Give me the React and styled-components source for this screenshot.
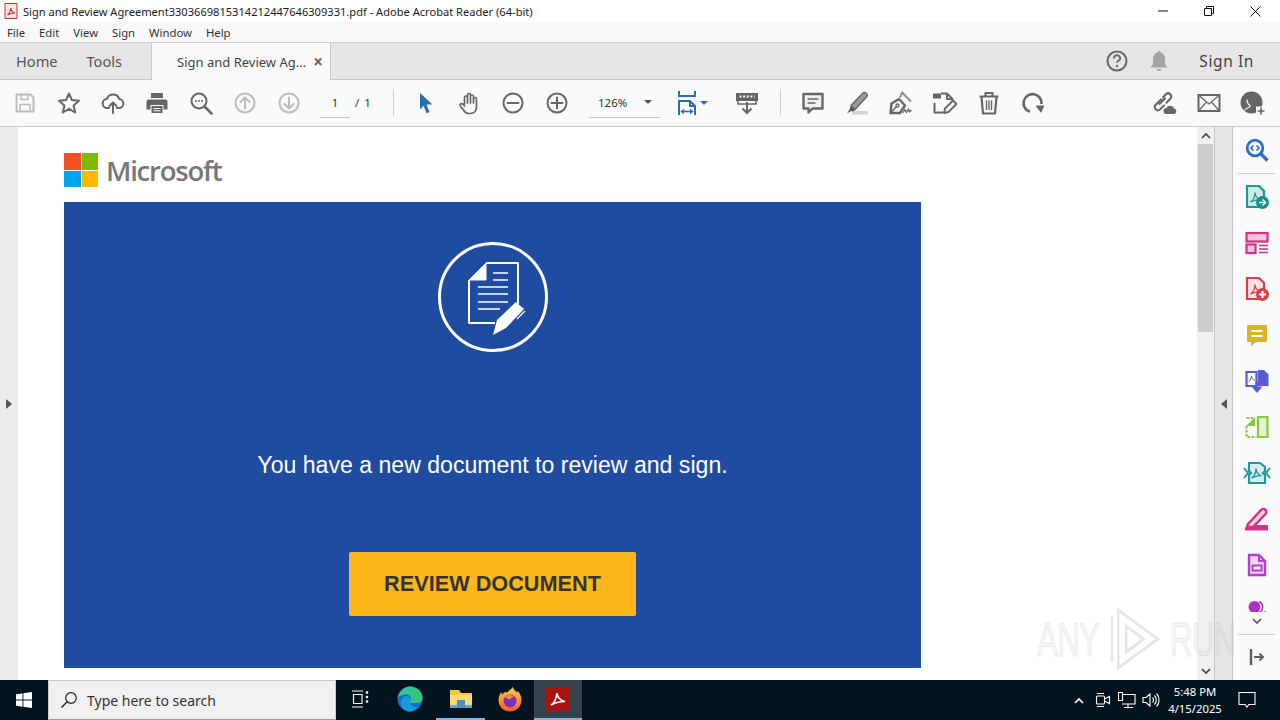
import styled, { createGlobalStyle } from "styled-components"

const GlobalStyle = createGlobalStyle`
    html, body { margin: 0; padding: 0; height: 100%; overflow: hidden; background: #fff; }
    * { box-sizing: border-box; }
    body { font-family: "Noto Sans", "Open Sans", sans-serif; }
    #root { width: 1280px; height: 720px; }
`

const GREY = "#666"
const OFF = "#bcbcbc"

/* ---- toolbar icons ---- */
const Ico = ({ size = 24, box = 24, color = GREY, sw = 2, children }) => (
    <svg width={size} height={size} viewBox={`0 0 ${box} ${box}`} fill="none" stroke={color} strokeWidth={sw} strokeLinecap="round" strokeLinejoin="round">
        {children}
    </svg>
)

const SaveIcon = () => (
    <Ico color={OFF}><path d="M3.5 3.5h14l3 3v14h-17z" /><path d="M8 3.5v5h7v-5M7 20.5v-7h10v7" strokeWidth="1.5" /></Ico>
)
const StarIcon = () => (
    <Ico><path d="M12 2.5l2.9 6.6 7.1.7-5.4 4.7 1.6 7-6.2-3.7-6.2 3.7 1.6-7L2 9.8l7.1-.7z" /></Ico>
)
const CloudIcon = () => (
    <Ico><path d="M8 17H6.5a4.5 4.5 0 0 1-.6-9 6.5 6.5 0 0 1 12.3 0 4.5 4.5 0 0 1-.7 9H16" /><path d="M12 22v-10M8.5 15l3.5-3.5 3.5 3.5" /></Ico>
)
const PrintIcon = () => (
    <svg width="24" height="24" viewBox="0 0 24 24" fill={GREY}>
        <path d="M6 2h12v5H6zM3.500 8.500h17a2 2 0 0 1 2 2v8h-4V14h-13v4.500h-4v-8a2 2 0 0 1 2-2z" />
        <path d="M6.500 15h11v7h-11z" />
        <path d="M8.500 17.500h7M8.500 19.800h7" stroke="#fafafa" strokeWidth="1.100" />
    </svg>
)
const SearchDotsIcon = () => (
    <Ico><circle cx="10" cy="10" r="7.500" /><path d="M15.500 15.500l7 7" strokeWidth="2.600" /><path d="M7 10h.01M10 10h.01M13 10h.01" strokeWidth="2" /></Ico>
)
const CircleArrow = ({ down }) => (
    <Ico color={OFF}><circle cx="12" cy="12" r="9.500" />{down ? <path d="M12 6.500v11M7.500 13l4.500 4.500 4.500-4.500" /> : <path d="M12 17.500v-11M7.500 11l4.500-4.500 4.500 4.500" />}</Ico>
)
const PointerIcon = () => (
    <svg width="24" height="24" viewBox="0 0 24 24" fill="#2a6db5"><path d="M7 2l12.500 11.500h-6l3 7.500-3 1.300-3-7.600L7 18.500z" /></svg>
)
const HandIcon = () => (
    <Ico><path d="M7.500 13V6.500a1.500 1.500 0 0 1 3 0V4a1.500 1.500 0 0 1 3 0v1.500a1.500 1.500 0 0 1 3 0V8a1.500 1.500 0 0 1 3 0v8c0 4-2.500 6.500-6 6.500H12c-2.500 0-4-1-5.200-3L3.300 15c-1-2 1.500-3.200 2.700-1.700L7.500 15M10.500 6v6M13.500 5v7M16.500 6v6" strokeWidth="1.700" /></Ico>
)
const CirclePM = ({ plus }) => (
    <Ico><circle cx="12" cy="12" r="9.500" /><path d={plus ? "M6.500 12h11M12 6.500v11" : "M6.500 12h11"} /></Ico>
)
const FitIcon = () => (
    <svg width="20" height="26" viewBox="0 0 20 26" fill="none" stroke="#2a6db5" strokeWidth="2">
        <path d="M2 1v5h16V1M2 25V11h11l5 5v9M13 11v5h5" />
        <path d="M5 21.500h10M7 19.500l-2.500 2 2.500 2M13 19.500l2.500 2-2.500 2" strokeWidth="1.300" />
    </svg>
)
const SmallCaret = styled.span`
    width: 0;
    height: 0;
    border-left: 4px solid transparent;
    border-right: 4px solid transparent;
    border-top: 4px solid ${({ $color }) => $color || "#555"};
`
const ReadIcon = () => (
    <svg width="24" height="24" viewBox="0 0 24 24" fill="none">
        <path d="M1 2h22v8H1z" fill="#666" />
        <path d="M4.500 5.500h15" stroke="#fafafa" strokeWidth="1.800" strokeDasharray="2 1.600" />
        <path d="M3 10v3h18v-3" stroke="#666" strokeWidth="1.500" />
        <path d="M12 11v11M7.500 17.500L12 22l4.500-4.500" stroke="#666" strokeWidth="2" />
    </svg>
)
const CommentIcon = () => (
    <svg width="24" height="24" viewBox="0 0 24 24" fill="#f0f0f0" stroke={GREY} strokeWidth="2.400" strokeLinejoin="round">
        <path d="M2.500 3h19v14.500H11.500l-4 4v-4h-5z" />
        <path d="M6.500 8h11M6.500 12h8" strokeWidth="1.400" />
    </svg>
)
const HighlightIcon = () => (
    <svg width="26" height="24" viewBox="0 0 26 24" fill="none">
        <path d="M8 20h16v3.500H8z" fill="#d4d4d4" />
        <path d="M7 14.500L18.500 2.500a2.500 2.500 0 0 1 4 3.500L11 18.500z" fill="#9a9a9a" stroke={GREY} strokeWidth="1.400" strokeLinejoin="round" />
        <path d="M6.500 15l4.500 4-2 1.500-2-.5-4 2.500 2.500-4z" fill="#555" />
    </svg>
)
const PenIcon = () => (
    <svg width="26" height="24" viewBox="0 0 26 24" fill="none" stroke={GREY} strokeLinejoin="round">
        <path d="M2.500 22l1-9.500L11 8l6 6.500-5 7.500z" strokeWidth="2.400" />
        <path d="M2.500 22l6-6.500" strokeWidth="1.600" />
        <circle cx="9.500" cy="14.500" r="1.500" strokeWidth="1.300" />
        <path d="M12 6.500l2-5 9 9" strokeWidth="2" stroke="#8e8e8e" />
        <path d="M15 22l2-3.500 1.500 3 2-3.500 1 3 2-2" strokeWidth="1.300" />
    </svg>
)
const StampIcon = () => (
    <svg width="26" height="24" viewBox="0 0 26 24" fill="none" stroke={GREY} strokeWidth="2" strokeLinejoin="round">
        <path d="M1 2.500h8v5H1z" fill={GREY} stroke="none" />
        <path d="M9 2.500h6l5.500 5.500v3M15 2.500v5.500h5.500M2.500 12v9.500h9" />
        <path d="M12 22l1-4.500 8-8 3.500 3.500-8 8z" fill="#fafafa" strokeWidth="1.800" />
    </svg>
)
const TrashIcon = () => (
    <svg width="24" height="24" viewBox="0 0 24 24" fill="none" stroke={GREY} strokeWidth="2.200" strokeLinejoin="round">
        <path d="M2.500 5.500h19M8.500 5V2h7v3M4.500 6l1.500 16.500h12L19.500 6" />
        <path d="M9.500 9.500v9.500M12 9.500v9.500M14.500 9.500v9.500" strokeWidth="1.400" />
    </svg>
)
const RotateIcon = () => (
    <svg width="24" height="24" viewBox="0 0 24 24" fill="none">
        <path d="M9 20.800A9 9 0 1 1 20.500 13" stroke={GREY} strokeWidth="2.600" />
        <path d="M14.500 14.500h9l-3.500 7.500z" fill={GREY} />
    </svg>
)
const LinkCloudIcon = () => (
    <svg width="26" height="24" viewBox="0 0 26 24" fill="none" stroke={GREY} strokeWidth="2" strokeLinecap="round">
        <path d="M9 8.500l-5.500 5.500a3.200 3.200 0 0 0 4.500 4.500l4-4M11 6.500l3-3.500A3.200 3.200 0 0 1 18.500 7.500l-4 4.200M7.500 13l5.500-5.500" />
        <path d="M14.500 23a3 3 0 0 1 0-6 4 4 0 0 1 7.500 .6A2.800 2.800 0 0 1 22.500 23z" fill={GREY} stroke="none" />
    </svg>
)
const MailIcon = () => (
    <svg width="24" height="24" viewBox="0 0 24 24" fill="none" stroke={GREY}>
        <path d="M1.500 4h21v16h-21z" strokeWidth="2" />
        <path d="M1.500 4L12 13 22.500 4M1.500 20l8-9M22.500 20l-8-9" strokeWidth="1.300" />
    </svg>
)
const UserPlusIcon = () => (
    <svg width="26" height="24" viewBox="0 0 26 24" fill="none">
        <circle cx="11.500" cy="11.500" r="11" fill={GREY} />
        <path d="M4.500 19.500c1.500-2.500 3.500-3 5.500-3.800v-1.200c-2-1.500-3-3.500-3-6" stroke="#fafafa" strokeWidth="1.200" />
        <path d="M16 15.500h10v8.500H16z" fill="#fafafa" />
        <path d="M17.500 20h7M21 16.500v7" stroke={GREY} strokeWidth="1.700" />
    </svg>
)
const HelpIcon = () => (
    <svg width="22" height="22" viewBox="0 0 22 22" fill="none">
        <circle cx="11" cy="11" r="9.500" stroke={GREY} strokeWidth="2" />
        <path d="M7.800 8.500a3.200 3.200 0 0 1 6.400 0c0 2-3.200 2.200-3.200 4.300" stroke={GREY} strokeWidth="1.900" />
        <circle cx="11" cy="16" r="1.200" fill={GREY} />
    </svg>
)
const BellIcon = () => (
    <svg width="18" height="22" viewBox="0 0 18 22" fill="#a5a5a5">
        <path d="M9 1a1.500 1.500 0 0 1 1.500 1.600C13.500 3.300 15 6 15 9v5l2.500 3.500H.5L3 14V9c0-3 1.500-5.700 4.500-6.400A1.500 1.500 0 0 1 9 1z" />
        <path d="M6.500 19h5a2.500 2 0 0 1-5 0z" />
    </svg>
)

/* ---- right rail icons ---- */
const PdfMark = ({ color }) => (
    <path d="M5.500 17c3-2 4.500-6 4.500-9.500 0 3.500 2.500 6.500 5.500 7-3.500 0-6.500.8-10 2.500z" fill="none" stroke={color} strokeWidth="1.300" />
)
const RailSearch = () => (
    <svg width="24" height="24" viewBox="0 0 24 24" fill="none" stroke="#2a6cc4" strokeWidth="2.800">
        <circle cx="10" cy="10" r="7.800" /><path d="M16 16l6.500 6.500" strokeWidth="3.200" />
        <path d="M8.500 7.500L6 10l2.500 2.500M11.500 7.500L14 10l-2.500 2.500" strokeWidth="1.700" />
    </svg>
)
const RailExport = () => (
    <svg width="24" height="24" viewBox="0 0 24 24" fill="none">
        <path d="M2 1h12l5 5v16H2z" fill="#cfeae6" stroke="#1d9a8a" strokeWidth="2.200" />
        <PdfMark color="#1d9a8a" />
        <circle cx="17.500" cy="17.500" r="6.500" fill="#12908a" />
        <path d="M14 17.500h6.500M17.500 14.500l3 3-3 3" stroke="#fff" strokeWidth="1.600" fill="none" />
    </svg>
)
const RailOrganize = () => (
    <svg width="24" height="24" viewBox="0 0 24 24" fill="none" stroke="#d22f86" strokeWidth="2.200">
        <rect x="1.500" y="2" width="21" height="8.500" fill="#f4c6de" />
        <rect x="1.500" y="13.500" width="9" height="8.500" fill="#f4c6de" />
        <path d="M14 14.500h9M14 18h9M14 21.500h9" strokeWidth="1.300" />
    </svg>
)
const RailCreate = () => (
    <svg width="24" height="24" viewBox="0 0 24 24" fill="none">
        <path d="M2 1h12l5 5v16H2z" fill="#fbe2e4" stroke="#d8404f" strokeWidth="2.200" />
        <PdfMark color="#d8404f" />
        <circle cx="17.500" cy="17.500" r="6.500" fill="#dc3c4a" />
        <path d="M14 17.500h7M17.500 14v7" stroke="#fff" strokeWidth="2" />
    </svg>
)
const RailNote = () => (
    <svg width="24" height="24" viewBox="0 0 24 24">
        <path d="M3 2h18a1 1 0 0 1 1 1v15a1 1 0 0 1-1 1H11l-5 4v-4H3a1 1 0 0 1-1-1V3a1 1 0 0 1 1-1z" fill="#d9b428" />
        <path d="M6.500 8h11M6.500 13h11" stroke="#fff" strokeWidth="2" />
    </svg>
)
const RailCombine = () => (
    <svg width="24" height="24" viewBox="0 0 24 24" fill="none">
        <path d="M1.500 3h10v14h-10z" fill="#fff" stroke="#5a5ad8" strokeWidth="2.200" />
        <path d="M3.500 13c2-1.500 3-4 3-6 0 2 1.200 4 3.500 4.500" stroke="#5a5ad8" strokeWidth="1" />
        <path d="M13 1h6l4.500 4.500V17H13z" fill="#5a5ad8" />
        <path d="M12 13v9" stroke="#5a5ad8" strokeWidth="2.800" />
        <path d="M6.500 17.500h11L12 24z" fill="#5a5ad8" />
    </svg>
)
const RailCompare = () => (
    <svg width="24" height="24" viewBox="0 0 24 24" fill="none">
        <path d="M1.500 11v11h10M1.500 3h8" stroke="#8dc63f" strokeWidth="2.200" strokeDasharray="2.500 1.500" />
        <path d="M13 2h9.500v20H13z" fill="#e3f3cf" stroke="#8dc63f" strokeWidth="2.200" />
        <path d="M10 2v9H1z" fill="#8dc63f" />
    </svg>
)
const RailCompress = () => (
    <svg width="28" height="24" viewBox="0 0 28 24" fill="none">
        <path d="M6 2h11l5 4v4l-2 2 2 2v8H6v-8l2-2-2-2z" fill="#d5eff0" stroke="#1f979d" strokeWidth="2.200" />
        <path d="M8.500 17c3-2 4.500-6 4.500-9.500 0 3.500 2.500 6.500 5.500 7-3.500 0-6.500.8-10 2.500z" fill="none" stroke="#1f979d" strokeWidth="1.400" />
        <path d="M1 7l4 5-4 5M27 7l-4 5 4 5" stroke="#1f979d" strokeWidth="2" />
    </svg>
)
const RailFill = () => (
    <svg width="24" height="24" viewBox="0 0 24 24" fill="none">
        <path d="M3 17L16 3a3 3 0 0 1 4.500 4L8 20H2z" fill="#f7cfe2" stroke="#d6308a" strokeWidth="2.400" />
        <path d="M10 18h13v5.500H0V21l3-1h5z" fill="#d6308a" />
    </svg>
)
const RailForm = () => (
    <svg width="24" height="24" viewBox="0 0 24 24" fill="none">
        <path d="M4 2h10l6 6v14H4z" fill="#f2d5f7" stroke="#b53fc9" strokeWidth="2.400" />
        <path d="M14 2v6h6" stroke="#b53fc9" strokeWidth="2" />
        <rect x="7.500" y="12.500" width="9" height="5" fill="#fff" stroke="#b53fc9" strokeWidth="2" />
    </svg>
)
const RailCut = () => (
    <svg width="24" height="24" viewBox="0 0 24 24">
        <circle cx="9.500" cy="8" r="6" fill="#b02fc0" />
        <path d="M14 2.500a6 6 0 0 1 0 11" stroke="#b02fc0" strokeWidth="1.600" fill="none" />
        <circle cx="20" cy="13" r=".9" fill="#b02fc0" />
    </svg>
)
const RailExpand = () => (
    <svg width="16" height="18" viewBox="0 0 16 18" fill="none" stroke="#5f5f5f">
        <path d="M2 1v16" strokeWidth="2.400" />
        <path d="M5 9h9M10.500 5.500L14 9l-3.500 3.500" strokeWidth="2" />
    </svg>
)

/* ---- taskbar glyphs ---- */
const WindowsLogo = () => (
    <svg width="16" height="16" viewBox="0 0 16 16" fill="#fff">
        <path d="M0 2.300l6.500-.9v6.200H0zM7.400 1.300L16 0v7.600H7.400zM0 8.500h6.500v6.200L0 13.800zM7.400 8.500H16V16l-8.600-1.200z" />
    </svg>
)
const SearchGlass = () => (
    <svg width="18" height="18" viewBox="0 0 18 18" fill="none" stroke="#222" strokeWidth="1.200">
        <circle cx="11" cy="7" r="5.300" /><path d="M7.200 10.800L1.500 16.500" strokeWidth="1.400" />
    </svg>
)
const TaskView = () => (
    <svg width="18" height="18" viewBox="0 0 18 18" fill="none" stroke="#fff" strokeWidth="1.100">
        <path d="M1 1h11M1 17h11M2.500 4.500h8.500v9H2.500z" /><path d="M15 1.500h2v2h-2zM15 6h2v2h-2zM15 10.500h2v2h-2z" fill="#fff" strokeWidth=".3" />
    </svg>
)
const EdgeIcon = () => (
    <svg width="26" height="26" viewBox="0 0 26 26">
        <defs>
            <linearGradient id="edgeA" x1="0" y1="0" x2="1" y2="1"><stop offset="0" stopColor="#2fc39d" /><stop offset="1" stopColor="#35c96f" /></linearGradient>
        </defs>
        <circle cx="13" cy="13" r="12.500" fill="#0f6fc6" />
        <path d="M1 11C3 3 10 .5 13 .5c7 0 12.500 5 12.500 11.500 0 3-2 5-5.500 5H14c-3 0-2-2.500-.5-3.500 1-1 .5-5-4-5-4 0-7.500 2-8.500 2.500z" fill="url(#edgeA)" />
        <path d="M9 10c3 0 5.500 2 4.500 5-1 3.500 2.500 6.500 7 6.500-2 2-5 4-8 4C6 25.500 3 20 4 15.500 4.500 13 6.500 10 9 10z" fill="#1a9bdc" />
    </svg>
)
const FolderIcon = () => (
    <svg width="24" height="22" viewBox="0 0 24 22">
        <path d="M1 2h9l2 3h11v15H1z" fill="#f4c842" />
        <path d="M1 7h22v13H1z" fill="#fbdc6e" />
        <path d="M8 12h8v8H8z" fill="#4a90c8" />
        <path d="M1 17h7v3H1zM16 17h7v3h-7z" fill="#5da7d8" />
    </svg>
)
const FirefoxIcon = () => (
    <svg width="24" height="26" viewBox="0 0 24 26">
        <defs>
            <linearGradient id="foxA" x1="0" y1="0" x2="0" y2="1"><stop offset="0" stopColor="#ffd23a" /><stop offset="1" stopColor="#ff5a2c" /></linearGradient>
        </defs>
        <path d="M15 .5c0 3 2 3.500 4 6 0-.5.500-1 .8-1.500C22.500 8 23.500 11 23.500 14c0 6.500-5 11.500-11.500 11.500S.5 20.500.5 14c0-3 1-6 3-8 0 1 .3 2 1 2.500C5.500 6 8 6 9.500 6.500 11 4 14 3 15 .5z" fill="url(#foxA)" />
        <circle cx="12" cy="15" r="6.500" fill="#7a2fc0" />
        <path d="M7 11c3-3 7-2 9 0-2 0-3 1-3.500 2-2 .5-4-.5-5.500-2z" fill="#ff8a3c" />
    </svg>
)
const AcrobatIcon = () => (
    <svg width="24" height="24" viewBox="0 0 24 24">
        <rect width="24" height="24" rx="2" fill="#a8120f" />
        <path d="M5 18c3.500-2 5.500-7 6-12 .5 4 3 7.500 8 8.500-5 0-9.500 1-14 3.500z" fill="none" stroke="#fff" strokeWidth="1.700" />
    </svg>
)
const TitleIcon = () => (
    <svg width="14" height="16" viewBox="0 0 14 16">
        <path d="M1 .5h12v15H1z" fill="#fbe8e6" stroke="#c9302c" />
        <path d="M3.500 12c2-1.500 3-4 3.400-7 .3 2.500 1.700 4.500 4 5-3 0-5.400.7-7.400 2z" fill="none" stroke="#c9302c" strokeWidth="1.100" />
    </svg>
)
const MeetIcon = () => (
    <svg width="16" height="18" viewBox="0 0 16 18" fill="none" stroke="#fff" strokeWidth="1.100">
        <path d="M2 2.500h7M2 15.500h7" /><rect x="1.500" y="5" width="8" height="8" rx="1" /><path d="M9.500 8l5-2.500v7l-5-2.500" />
    </svg>
)
const NetworkIcon = () => (
    <svg width="18" height="16" viewBox="0 0 18 16" fill="none" stroke="#fff" strokeWidth="1.100">
        <path d="M5 2.500h12V12H5M5 12h-1M10 12v3M6 15.500h9M.5 .5h4v8h-4z" />
    </svg>
)
const SpeakerIcon = () => (
    <svg width="18" height="16" viewBox="0 0 18 16" fill="none" stroke="#fff" strokeWidth="1.100">
        <path d="M1 5.500h3L8 2v12l-4-3.500H1zM10.500 5.500a3.500 3.500 0 0 1 0 5M12.500 3.500a6.500 6.500 0 0 1 0 9M14.500 1.500a9.500 9.500 0 0 1 0 13" />
    </svg>
)
const ActionCenter = () => (
    <svg width="18" height="18" viewBox="0 0 18 18" fill="none" stroke="#fff" strokeWidth="1.100">
        <path d="M1 1.500h16v12H11l-2 2.500-2-2.500H1z" />
    </svg>
)
const WinMin = () => <svg width="10" height="10" viewBox="0 0 10 10" stroke="#111"><path d="M0 5h10" /></svg>
const WinRestore = () => (
    <svg width="10" height="10" viewBox="0 0 10 10" fill="none" stroke="#111"><path d="M.5 2.500h7v7h-7zM2.500 2.500v-2h7v7h-2" /></svg>
)
const WinClose = () => <svg width="11" height="11" viewBox="0 0 11 11" stroke="#111"><path d="M.5 .5l10 10M10.500 .5l-10 10" /></svg>

/* ---- blue banner drawing ---- */
const DocumentBadge = () => (
    <svg width="110" height="110" viewBox="0 0 110 110" fill="none" stroke="#fff">
        <circle cx="55" cy="55" r="53.500" strokeWidth="3" />
        <path d="M48 21h32v42M57 81H31V38" strokeWidth="2" strokeLinejoin="round" />
        <path d="M31 38h17V21z" fill="#fff" strokeWidth="1" strokeLinejoin="round" />
        <path d="M55 31h15M55 38h15M40 45h30M40 52h30M40 60h30M40 67h22" strokeWidth="1.500" />
        <path d="M55 93l4-15 19-18 8 7-18 19z" fill="#fff" stroke="none" />
        <path d="M79 77l8-8" strokeWidth="1.200" />
    </svg>
)

/* ---- page ---- */
const Window = styled.div`
    width: 1280px;
    height: 720px;
    display: flex;
    flex-direction: column;
    overflow: hidden;
    position: relative;
`
const TitleBar = styled.div`
    height: 22px;
    flex: none;
    display: flex;
    align-items: center;
    padding-left: 4px;
    background: #fff;
    font-size: 11.1px;
    color: #1a1a1a;
`
const TitleText = styled.span`
    margin-left: 5px;
    flex: 1;
    white-space: nowrap;
`
const WinButton = styled.div`
    width: 46px;
    height: 22px;
    display: flex;
    align-items: center;
    justify-content: center;
`
const WinButtons = styled.div`
    display: flex;
    padding-right: 2px;
`
const MenuBar = styled.div`
    height: 21px;
    flex: none;
    display: flex;
    align-items: center;
    gap: 14px;
    padding-left: 7px;
    background: #f9f9f9;
    border-bottom: 1px solid #cfcfcf;
    font-size: 11.3px;
    color: #333;
`
const TabBar = styled.div`
    height: 37px;
    flex: none;
    display: flex;
    align-items: stretch;
    background: #e6e6e6;
    border-bottom: 1px solid #c9c9c9;
    color: #555;
`
const NavTab = styled.div`
    display: flex;
    align-items: center;
    font-size: 14.6px;
    margin-left: ${({ $gap }) => $gap}px;
`
const DocTab = styled.div`
    width: 180px;
    margin-left: 29px;
    margin-bottom: -1px;
    display: flex;
    align-items: center;
    padding-left: 25px;
    gap: 7px;
    background: #fafafa;
    border-left: 1px solid #c9c9c9;
    border-right: 1px solid #c9c9c9;
    font-size: 13px;
    color: #444;
    white-space: nowrap;
`
const TabClose = styled.span`
    font-size: 17px;
    line-height: 1;
    font-weight: 700;
    color: #666;
`
const TabRight = styled.div`
    margin-left: auto;
    display: flex;
    align-items: center;
    padding-right: 26px;
`
const BellGap = styled.span`
    width: 22px;
`
const SignIn = styled.span`
    margin-left: 31px;
    font-size: 15.5px;
    letter-spacing: .6px;
    color: #444;
`
const Toolbar = styled.div`
    height: 47px;
    flex: none;
    display: flex;
    align-items: center;
    padding: 0 5px 1px 3px;
    background: #fafafa;
    border-bottom: 1px solid #c9c9c9;
`
const ToolButton = styled.div`
    width: 44px;
    height: 30px;
    flex: none;
    display: flex;
    align-items: center;
    justify-content: center;
    gap: 3px;
    margin-left: ${({ $ml }) => $ml || 0}px;
`
const PageBox = styled.div`
    width: 30px;
    height: 30px;
    margin-left: 9px;
    display: flex;
    align-items: center;
    justify-content: center;
    border-bottom: 1px solid #c4c4c4;
    font-size: 11.5px;
    color: #333;
`
const PageTotal = styled.div`
    width: 30px;
    margin-left: 5px;
    font-size: 11.5px;
    color: #333;
    word-spacing: 2px;
`
const ToolDivider = styled.div`
    width: 1px;
    height: 27px;
    flex: none;
    margin: 0 ${({ $mr }) => $mr}px 0 ${({ $ml }) => $ml}px;
    background: #cfcfcf;
`
const ZoomBox = styled.div`
    width: 71px;
    height: 30px;
    margin-left: 10px;
    display: flex;
    align-items: center;
    justify-content: space-between;
    padding: 0 8px 0 9px;
    border-bottom: 1px solid #c4c4c4;
    font-size: 11.5px;
    color: #333;
`
const ToolEnd = styled.div`
    margin-left: auto;
    display: flex;
`
const Main = styled.div`
    flex: 1;
    min-height: 0;
    display: flex;
`
const SidePanel = styled.div`
    width: ${({ $w }) => $w}px;
    flex: none;
    display: flex;
    align-items: center;
    justify-content: center;
    background: ${({ $bg }) => $bg};
    border-left: ${({ $line }) => ($line ? "1px solid #c6c6c6" : "none")};
    border-right: ${({ $line }) => ($line ? "1px solid #c6c6c6" : "none")};
`
const Triangle = styled.span`
    width: 0;
    height: 0;
    border-top: 5px solid transparent;
    border-bottom: 5px solid transparent;
    ${({ $left }) => ($left ? "border-right: 6px solid #555;" : "border-left: 6px solid #555;")}
`
const Doc = styled.div`
    flex: 1;
    min-width: 0;
    padding: 26px 0 0 46px;
    background: #fff;
    overflow: hidden;
`
const LogoRow = styled.div`
    display: flex;
    align-items: center;
    height: 34px;
    gap: 8px;
`
const LogoGrid = styled.div`
    display: grid;
    grid-template-columns: 16.5px 16.5px;
    grid-template-rows: 16.5px 16.5px;
    gap: 1px;
`
const LogoCell = styled.span`
    background: ${({ $c }) => $c};
`
const LogoWord = styled.span`
    font-family: "Open Sans", sans-serif;
    font-weight: 600;
    font-size: 27.5px;
    letter-spacing: -1.2px;
    color: #777;
`
const Banner = styled.div`
    width: 857px;
    height: 466px;
    margin-top: 15px;
    display: flex;
    flex-direction: column;
    align-items: center;
    padding-top: 40px;
    background: #1f4ba0;
`
const BannerText = styled.div`
    margin-top: 98px;
    height: 30px;
    line-height: 30px;
    font-family: "Liberation Sans", Arial, sans-serif;
    font-size: 23.1px;
    color: #fff;
    white-space: nowrap;
`
const ReviewButton = styled.div`
    width: 287px;
    height: 64px;
    margin-top: 72px;
    display: flex;
    align-items: center;
    justify-content: center;
    background: #fdb71c;
    border-radius: 2px;
    font-family: "Liberation Sans", Arial, sans-serif;
    font-weight: 700;
    font-size: 21.7px;
    color: #333;
`
const ScrollBar = styled.div`
    width: 17px;
    flex: none;
    display: flex;
    flex-direction: column;
    align-items: stretch;
    background: #f0f0f0;
`
const ScrollArrow = styled.div`
    height: 17px;
    flex: none;
    display: flex;
    align-items: center;
    justify-content: center;
    margin-top: ${({ $end }) => ($end ? "auto" : "0")};
`
const ScrollThumb = styled.div`
    height: 188px;
    margin: 0 1px;
    background: #cdcdcd;
`
const Rail = styled.div`
    width: 47px;
    flex: none;
    display: flex;
    flex-direction: column;
    background: #fafafa;
`
const RailList = styled.div`
    height: 485px;
    flex: none;
    overflow: hidden;
`
const RailItem = styled.div`
    height: 46px;
    display: flex;
    align-items: center;
    justify-content: center;
`
const RailRule = styled.div`
    height: 1px;
    margin: ${({ $m }) => $m || "0 5px"};
    background: #cfcfcf;
`
const RailChevron = styled.div`
    height: 18px;
    flex: none;
    display: flex;
    align-items: center;
    justify-content: center;
`
const Taskbar = styled.div`
    height: 40px;
    flex: none;
    display: flex;
    align-items: stretch;
    background: #04141f;
    color: #fff;
`
const StartButton = styled.div`
    width: 48px;
    display: flex;
    align-items: center;
    justify-content: center;
`
const SearchBox = styled.div`
    width: 288px;
    display: flex;
    align-items: center;
    gap: 9px;
    padding-left: 11px;
    background: #f1f1f1;
    border: 1px solid #c9c9c9;
    border-bottom-color: #9a9a9a;
    font-size: 14px;
    color: #333;
`
const TaskItem = styled.div`
    width: ${({ $w }) => $w || 49}px;
    display: flex;
    align-items: center;
    justify-content: center;
    background: ${({ $active }) => ($active ? "#36434c" : "transparent")};
    border-bottom: 2px solid ${({ $open }) => ($open ? "#7fb8e6" : "transparent")};
`
const Tray = styled.div`
    margin-left: auto;
    display: flex;
    align-items: center;
    padding-right: 11px;
`
const TrayIcon = styled.div`
    width: 24px;
    display: flex;
    align-items: center;
    justify-content: center;
`
const Clock = styled.div`
    width: 60px;
    margin-left: 2px;
    text-align: center;
    font-size: 11.3px;
    line-height: 17px;
    color: #fff;
`
const Notify = styled.div`
    width: 44px;
    display: flex;
    justify-content: center;
`
const Watermark = styled.div`
    position: absolute;
    left: 1037px;
    top: 606px;
    width: 320px;
    height: 66px;
    display: flex;
    align-items: center;
    pointer-events: none;
    font-family: "Liberation Sans", sans-serif;
    font-size: 48px;
    color: rgba(190, 190, 190, .14);
    -webkit-text-stroke: 1px rgba(170, 170, 170, .25);
    letter-spacing: -1px;
    transform: scaleX(.65);
    transform-origin: left center;
    white-space: nowrap;
`
const WatermarkPlay = styled.svg`
    margin: 0 12px;
    flex: none;
`
const Chevron = ({ dir = "down", color = "#444", w = 10 }) => (
    <svg width={w} height="7" viewBox="0 0 10 7" fill="none" stroke={color} strokeWidth="1.700">
        <path d={dir === "down" ? "M1 1l4 4 4-4" : "M1 6l4-4 4 4"} />
    </svg>
)

const menus = ["File", "Edit", "View", "Sign", "Window", "Help"]
const railIcons = [RailExport, RailOrganize, RailCreate, RailNote, RailCombine, RailCompare, RailCompress, RailFill, RailForm, RailCut]

export default function App() {
    return (
        <Window>
            <GlobalStyle />
            <TitleBar>
                <TitleIcon />
                <TitleText>Sign and Review Agreement3303669815314212447646309331.pdf - Adobe Acrobat Reader (64-bit)</TitleText>
                <WinButtons>
                    <WinButton><WinMin /></WinButton>
                    <WinButton><WinRestore /></WinButton>
                    <WinButton><WinClose /></WinButton>
                </WinButtons>
            </TitleBar>
            <MenuBar>
                {menus.map((m) => <span key={m}>{m}</span>)}
            </MenuBar>
            <TabBar>
                <NavTab $gap={16}>Home</NavTab>
                <NavTab $gap={29}>Tools</NavTab>
                <DocTab>Sign and Review Ag... <TabClose>×</TabClose></DocTab>
                <TabRight>
                    <HelpIcon />
                    <BellGap />
                    <BellIcon />
                    <SignIn>Sign In</SignIn>
                </TabRight>
            </TabBar>
            <Toolbar>
                <ToolButton><SaveIcon /></ToolButton>
                <ToolButton><StarIcon /></ToolButton>
                <ToolButton><CloudIcon /></ToolButton>
                <ToolButton><PrintIcon /></ToolButton>
                <ToolButton><SearchDotsIcon /></ToolButton>
                <ToolButton><CircleArrow /></ToolButton>
                <ToolButton><CircleArrow down /></ToolButton>
                <PageBox>1</PageBox>
                <PageTotal>/ 1</PageTotal>
                <ToolDivider $ml={8} $mr={9} />
                <ToolButton><PointerIcon /></ToolButton>
                <ToolButton><HandIcon /></ToolButton>
                <ToolButton><CirclePM /></ToolButton>
                <ToolButton><CirclePM plus /></ToolButton>
                <ZoomBox>126% <SmallCaret /></ZoomBox>
                <ToolButton $ml={10}><FitIcon /><SmallCaret $color="#2a6db5" /></ToolButton>
                <ToolButton $ml={11}><ReadIcon /></ToolButton>
                <ToolDivider $ml={11} $mr={10} />
                <ToolButton><CommentIcon /></ToolButton>
                <ToolButton><HighlightIcon /></ToolButton>
                <ToolButton><PenIcon /></ToolButton>
                <ToolButton><StampIcon /></ToolButton>
                <ToolButton><TrashIcon /></ToolButton>
                <ToolButton><RotateIcon /></ToolButton>
                <ToolEnd>
                    <ToolButton><LinkCloudIcon /></ToolButton>
                    <ToolButton><MailIcon /></ToolButton>
                    <ToolButton><UserPlusIcon /></ToolButton>
                </ToolEnd>
            </Toolbar>
            <Main>
                <SidePanel $w={18} $bg="#ececec"><Triangle /></SidePanel>
                <Doc>
                    <LogoRow>
                        <LogoGrid>
                            <LogoCell $c="#f25022" />
                            <LogoCell $c="#7fba00" />
                            <LogoCell $c="#00a4ef" />
                            <LogoCell $c="#ffb900" />
                        </LogoGrid>
                        <LogoWord>Microsoft</LogoWord>
                    </LogoRow>
                    <Banner>
                        <DocumentBadge />
                        <BannerText>You have a new document to review and sign.</BannerText>
                        <ReviewButton>REVIEW DOCUMENT</ReviewButton>
                    </Banner>
                </Doc>
                <ScrollBar>
                    <ScrollArrow><Chevron dir="up" /></ScrollArrow>
                    <ScrollThumb />
                    <ScrollArrow $end><Chevron /></ScrollArrow>
                </ScrollBar>
                <SidePanel $w={19} $bg="#e6e6e6" $line><Triangle $left /></SidePanel>
                <Rail>
                    <RailList>
                        <RailItem><RailSearch /></RailItem>
                        <RailRule />
                        {railIcons.map((Icon, i) => <RailItem key={i}><Icon /></RailItem>)}
                    </RailList>
                    <RailChevron><Chevron w={14} color="#555" /></RailChevron>
                    <RailRule $m="4px 5px 0" />
                    <RailItem><RailExpand /></RailItem>
                </Rail>
            </Main>
            <Taskbar>
                <StartButton><WindowsLogo /></StartButton>
                <SearchBox><SearchGlass />Type here to search</SearchBox>
                <TaskItem $w={48}><TaskView /></TaskItem>
                <TaskItem $w={52}><EdgeIcon /></TaskItem>
                <TaskItem $open><FolderIcon /></TaskItem>
                <TaskItem><FirefoxIcon /></TaskItem>
                <TaskItem $w={48} $active $open><AcrobatIcon /></TaskItem>
                <Tray>
                    <TrayIcon><Chevron w={12} dir="up" color="#fff" /></TrayIcon>
                    <TrayIcon><MeetIcon /></TrayIcon>
                    <TrayIcon><NetworkIcon /></TrayIcon>
                    <TrayIcon><SpeakerIcon /></TrayIcon>
                    <Clock>5:48 PM<br />4/15/2025</Clock>
                    <Notify><ActionCenter /></Notify>
                </Tray>
            </Taskbar>
            <Watermark>
                ANY
                <WatermarkPlay width="85" height="66" viewBox="0 0 70 66" preserveAspectRatio="none" fill="none" stroke="rgba(170,170,170,.3)" strokeWidth="3">
                    <path d="M6 10v46M14 4l50 29-50 29zM24 20l22 13-22 13z" />
                </WatermarkPlay>
                RUN
            </Watermark>
        </Window>
    )
}
